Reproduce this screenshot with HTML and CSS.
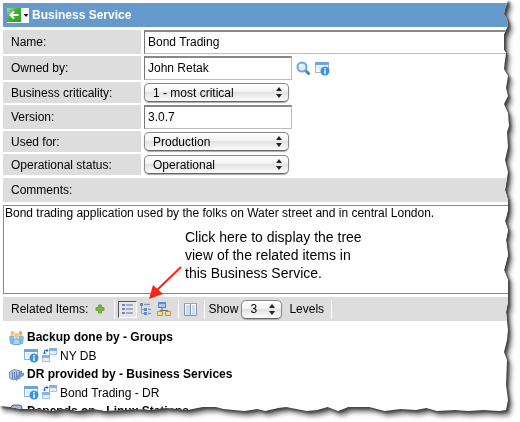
FILE: index.html
```html
<!DOCTYPE html>
<html lang="en">
<head>
<meta charset="utf-8">
<title>Business Service</title>
<link rel="stylesheet" href="styles.css">
</head>
<body>
<svg class="sprite" aria-hidden="true">
  <defs>
    <linearGradient id="green" x2="1" y2="1"><stop stop-color="#a9dc98"/><stop offset=".4" stop-color="#42b535"/><stop offset="1" stop-color="#2c9f26"/></linearGradient>
    <symbol id="record" viewBox="0 0 15 15">
      <rect x=".5" y="1.500" width="13" height="10" fill="#f4f9ff" stroke="#8db8e6"/>
      <path d="M0 1h14v3H0z" fill="#6da3df"/><path d="M2 6h5M2 8h4" stroke="#cfe1f5"/>
      <circle cx="10" cy="10" r="4.500" fill="#3c92e2"/><path d="M10 7v1.500M10 9.300V13" stroke="#fff" stroke-width="1.500"/>
    </symbol>
    <symbol id="relation" viewBox="0 0 15 15">
      <rect x="7.500" y=".5" width="7" height="6" fill="#e6f0fb" stroke="#9fc3ec"/><path d="M7 0h8v3H7z" fill="#82b2e8"/>
      <rect x=".5" y="7.500" width="7" height="6" fill="#e6f0fb" stroke="#9fc3ec"/><path d="M0 7h8v3H0z" fill="#82b2e8"/>
      <path d="M2.500 6V2.500H6M1 4.500L2.500 6 4 4.500M4.500 1L6 2.500 4.500 4" fill="none" stroke="#2f63b5"/>
    </symbol>
  </defs>
</svg>
<div class="shadow">
<main class="paper">
  <header class="title">
    <button class="back" type="button" aria-label="Back">
      <svg width="22" height="15" viewBox="0 0 22 15"><path d="M0 0h22v15H0z" fill="#fff"/><path d="M0 0h14v14H0z" fill="url(#green)"/><path d="M11.500 7H3.500M7 3.500L3.500 7 7 10.500" fill="none" stroke="#fff" stroke-width="2"/><path d="M16.500 6h5L19 9z" fill="#111"/></svg>
    </button>
    <h1>Business Service</h1>
  </header>
  <form class="form">
    <label for="name">Name:</label>
    <div class="field"><input class="wide" id="name" value="Bond Trading"></div>
    <label for="owner">Owned by:</label>
    <div class="field"><input id="owner" value="John Retak">
      <svg width="15" height="15" viewBox="0 0 15 15"><path d="M9 9l4.500 4.500" stroke="#4d83bd" stroke-width="3"/><circle cx="6" cy="6" r="4.500" fill="#d9efff" stroke="#69a7e3" stroke-width="2"/><path d="M3.500 6A2.500 2.500 0 0 1 6 3.500" fill="none" stroke="#fff"/></svg>
      <svg width="15" height="15"><use href="#record"/></svg>
    </div>
    <label for="crit">Business criticality:</label>
    <div class="field"><span class="pick"><select id="crit"><option>1 - most critical</option></select></span></div>
    <label for="version">Version:</label>
    <div class="field"><input id="version" value="3.0.7"></div>
    <label for="used">Used for:</label>
    <div class="field"><span class="pick"><select id="used"><option>Production</option></select></span></div>
    <label for="status">Operational status:</label>
    <div class="field"><span class="pick"><select id="status"><option>Operational</option></select></span></div>
    <label class="full" for="comments">Comments:</label>
    <div class="comments">
      <textarea id="comments">Bond trading application used by the folks on Water street and in central London.</textarea>
      <p class="callout">Click here to display the tree<br>view of the related items in<br>this Business Service.</p>
      <svg class="arrow" width="38" height="36" viewBox="0 0 38 36"><path d="M35 2L10 26" stroke="#fc231b" stroke-width="2"/><path d="M3 34L7 20 17 29z" fill="#fc231b"/></svg>
    </div>
  </form>
  <section class="toolbar">
    <span>Related Items:</span>
    <button class="add" type="button" aria-label="Add"><svg width="10" height="10" viewBox="0 0 10 10"><path d="M3.500 1h3v2.500H9v3H6.500V9h-3V6.500H1v-3h2.500z" fill="#76b443" stroke="#6ba045"/></svg></button>
    <div class="views">
      <button class="on" type="button" aria-label="List view"><svg width="12" height="12" viewBox="0 0 12 12"><path d="M0 1h3v2H0zM0 5h3v2H0zM0 9h3v2H0z" fill="#6488c5"/><path d="M4 2h7M4 6h7M4 10h7" stroke="#8b9bb7" stroke-width="1.500"/></svg></button>
      <button type="button" aria-label="Tree view"><svg width="12" height="12" viewBox="0 0 12 12"><path d="M1.500 2v8.500H5M2 6.500h3" fill="none" stroke="#8b9bb7"/><path d="M0 0h3v3H0zM4 5h3v3H4zM4 9h3v3H4z" fill="#6488c5"/><path d="M4 1.500h6M8 6.500h3M8 10.500h3" stroke="#8b9bb7" stroke-width="1.500"/></svg></button>
      <button type="button" aria-label="Map view"><svg width="14" height="14" viewBox="0 0 14 14"><path d="M5 6v3M3 11V8.500h8V11" fill="none" stroke="#686d79"/><rect x="1.500" y=".5" width="7" height="5" fill="#a9c4ed" stroke="#5783c4"/><path d="M1 0h8v2H1z" fill="#608ccd"/><path d="M.5 9.500h5v4h-5zM8.500 9.500h5v4h-5z" fill="#f5df86" stroke="#bd963c"/></svg></button>
    </div>
    <div class="split"><button type="button" aria-label="Split view"><svg width="13" height="13" viewBox="0 0 13 13"><path d="M.5.5h12v12H.5z" fill="#fff" stroke="#8292ad"/><path d="M2 2h4v10H2zM8 2h3v10H8z" fill="#cbdcf2"/><path d="M0 .5h13" stroke="#b6a272"/><path d="M6.500 1v11" stroke="#8292ad"/></svg></button></div>
    <div class="levels"><label for="levels">Show</label><span class="pick small"><select id="levels"><option>3</option></select></span><span>Levels</span></div>
  </section>
  <section class="related">
    <h2><svg width="15" height="15" viewBox="0 0 15 15"><circle cx="3.500" cy="3" r="2" fill="#efbd73"/><circle cx="11.500" cy="3" r="2" fill="#e9a95a"/><path d="M1 14L0 7q2-3 5-1l1 8zM14 14l1-7q-2-3-5-1l-1 8z" fill="#7fbcec"/><circle cx="7.500" cy="5.500" r="2.500" fill="#f3c583"/><path d="M4 14.500V10q3.500-3 7 0v4.500z" fill="#a8d5f6" stroke="#69a7df"/></svg>Backup done by - Groups</h2>
    <p><svg width="15" height="15"><use href="#record"/></svg><svg width="15" height="15"><use href="#relation"/></svg>NY DB</p>
    <h2><svg width="15" height="15" viewBox="0 0 15 15"><path d="M.5 5L5 2.500l6 1.500v7.500l-8 1L.5 11z" fill="#b6c8e4" stroke="#768fbd"/><path d="M3.500 5v7M5.500 5v7M7.500 5v6" stroke="#6581b3"/><path d="M6.500 13L11 8" stroke="#7593c8" stroke-width="3"/><path d="M10 7q0-3 3-3l-1 2 1 1 2-1q0 4-4 3z" fill="#8ba9d8" stroke="#5b7fb8"/></svg>DR provided by - Business Services</h2>
    <p><svg width="15" height="15"><use href="#record"/></svg><svg width="15" height="15"><use href="#relation"/></svg>Bond Trading - DR</p>
    <h2><svg width="15" height="15" viewBox="0 0 15 15"><rect x="2" y="1" width="11" height="12" rx="3" fill="#a8b8d0" stroke="#53627c"/></svg>Depends on - Linux Stations</h2>
  </section>
</main>
</div>
</body>
</html>
```

FILE: styles.css
```css
* { box-sizing: border-box; }
body { margin: 0; background: #fff; font: 12px/14px "Liberation Sans", Arial, sans-serif; color: #000; }
h1, h2, p { margin: 0; }
button { border: 0; padding: 0; background: none; display: flex; align-items: center; justify-content: center; }
svg { display: block; flex: none; }
.sprite { position: absolute; width: 0; height: 0; }
.shadow { padding-bottom: 10px; filter: drop-shadow(2px 2px 1px #444) drop-shadow(2px 3px 2px #777); }

/* Torn right and bottom edges, measured from the window's far side. */
.paper {
  background: #fff;
  height: calc(100vh - 10px);
  min-height: 412px;
  padding: 3px 11px 0 3px;
  overflow: hidden;
  clip-path: polygon(0 0, calc(100% - 12px) 0, calc(100% - 13px) 4px, calc(100% - 15px) 9px, calc(100% - 16px) 14px, calc(100% - 13px) 19px, calc(100% - 12px) 26px, calc(100% - 16px) 34px, calc(100% - 16px) 50px, calc(100% - 14px) 53px, calc(100% - 15px) 60px, calc(100% - 16px) 69px, calc(100% - 12px) 76px, calc(100% - 14px) 88px, calc(100% - 12px) 96px, calc(100% - 16px) 104px, calc(100% - 12px) 113px, calc(100% - 11px) 126px, calc(100% - 13px) 132px, calc(100% - 12px) 147px, calc(100% - 15px) 160px, calc(100% - 12px) 172px, calc(100% - 15px) 190px, calc(100% - 12px) 200px, calc(100% - 12px) 210px, calc(100% - 15px) 221px, calc(100% - 12px) 230px, calc(100% - 14px) 240px, calc(100% - 12px) 255px, calc(100% - 16px) 270px, calc(100% - 12px) 280px, calc(100% - 12px) 302px, calc(100% - 14px) 312px, calc(100% - 12px) 330px, calc(100% - 13px) 340px, calc(100% - 16px) 352px, calc(100% - 13px) 360px, calc(100% - 14px) 385px, calc(100% - 12px) 400px, calc(100% - 14px) calc(100% - 2px),
    96% calc(100% - 1px), 93% calc(100% - 2px), 90% calc(100% - 1px), 87.5% calc(100% - 2px), 84% calc(100% - 1px), 82% calc(100% - 4px), 80% calc(100% - 2px), 77% calc(100% - 3px), 74% calc(100% - 1px), 71% calc(100% - 5px), 67% calc(100% - 5px), 65% calc(100% - 1px), 63% calc(100% - 5px), 61% calc(100% - 2px), 59% calc(100% - 1px), 55% calc(100% - 5px), 53.5% calc(100% - 4px), 51% calc(100% - 1px), 49.5% calc(100% - 3px), 47% calc(100% - 1px), 43% calc(100% - 3px), 41.5% calc(100% - 5px), 39% calc(100% - 5px), 36% calc(100% - 2px), 32% calc(100% - 4px), 29% calc(100% - 2px), 26% calc(100% - 3px), 24% calc(100% - 2px), 20% calc(100% - 1px), 18% calc(100% - 3px), 15% calc(100% - 1px), 12% calc(100% - 3px), 10% calc(100% - 1px), 7% calc(100% - 3px), 4% calc(100% - 3px), 2% calc(100% - 5px), 0 calc(100% - 6px));
}

.title { display: flex; align-items: center; gap: 3px; height: 24px; padding-left: 4px; background: #6699cc; }
.title h1 { font-size: 12px; line-height: 14px; color: #fff; }

.form { display: grid; grid-template-columns: 138px 1fr; gap: 2px 3px; margin-top: 3px; }
.form > label { display: flex; align-items: center; padding-left: 8px; background: #ddd; }
.form > .full { grid-column: 1 / -1; height: 24px; margin-top: 1px; }
.field { display: flex; align-items: center; gap: 4px; }
.field input { width: 148px; height: 24px; padding: 2px 3px 3px; border: 1px solid #bbb; border-top: 2px solid #888; border-left-color: #777; font: inherit; }
.field .wide { width: 100%; border-right: 0; }

.pick { position: relative; display: block; width: 145px; height: 21px; padding: 1px 0; }
.pick select { appearance: none; display: block; width: 100%; height: 19px; padding: 0 24px 0 8px; border: 1px solid #888; border-bottom-color: #666; border-radius: 5px; background: linear-gradient(#fff, #f3f3f3 45%, #e2e2e2 50%, #fcfcfc); box-shadow: 0 1px 1px #aaa; font: inherit; color: #000; }
.pick::before, .pick::after { content: ""; position: absolute; right: 7px; border: 3px solid transparent; border-top-width: 0; border-bottom: 4px solid #222; top: 5px; }
.pick::after { border-bottom: 0; border-top: 4px solid #222; top: 12px; }

.comments { grid-column: 1 / -1; position: relative; margin-top: 1px; }
.comments textarea { display: block; width: 100%; height: 89px; padding: 0 1px; border: 1px solid #888; border-right: 0; resize: none; font: inherit; overflow: hidden; }
.callout { position: absolute; left: 182px; top: 23px; font-size: 14px; line-height: 18px; }
.arrow { position: absolute; left: 143px; top: 60px; }

.toolbar { display: flex; align-items: center; height: 24px; margin-top: 3px; padding-left: 8px; background: #ddd; }
.add { margin: 0 9px 0 7px; }
.views, .split, .levels { display: flex; align-items: center; height: 19px; border-left: 1px solid #fff; }
.views { padding: 0 5px 0 3px; }
.views button { width: 18px; height: 17px; }
.views .on { width: 19px; border: 1px solid #fff; border-top-color: #555; border-left-color: #555; background: #e5e5e5; }
.split { padding: 0 7px 0 5px; }
.levels { padding: 0 7px 0 3px; border-right: 1px solid #fff; }
.small { width: 41px; margin: 0 7px 0 3px; }

.related { padding: 7px 0 0 6px; }
.related h2, .related p { display: flex; align-items: center; gap: 3px; height: 18px; font-size: 12px; line-height: 14px; }
.related p { height: 19px; padding-left: 15px; }
```
